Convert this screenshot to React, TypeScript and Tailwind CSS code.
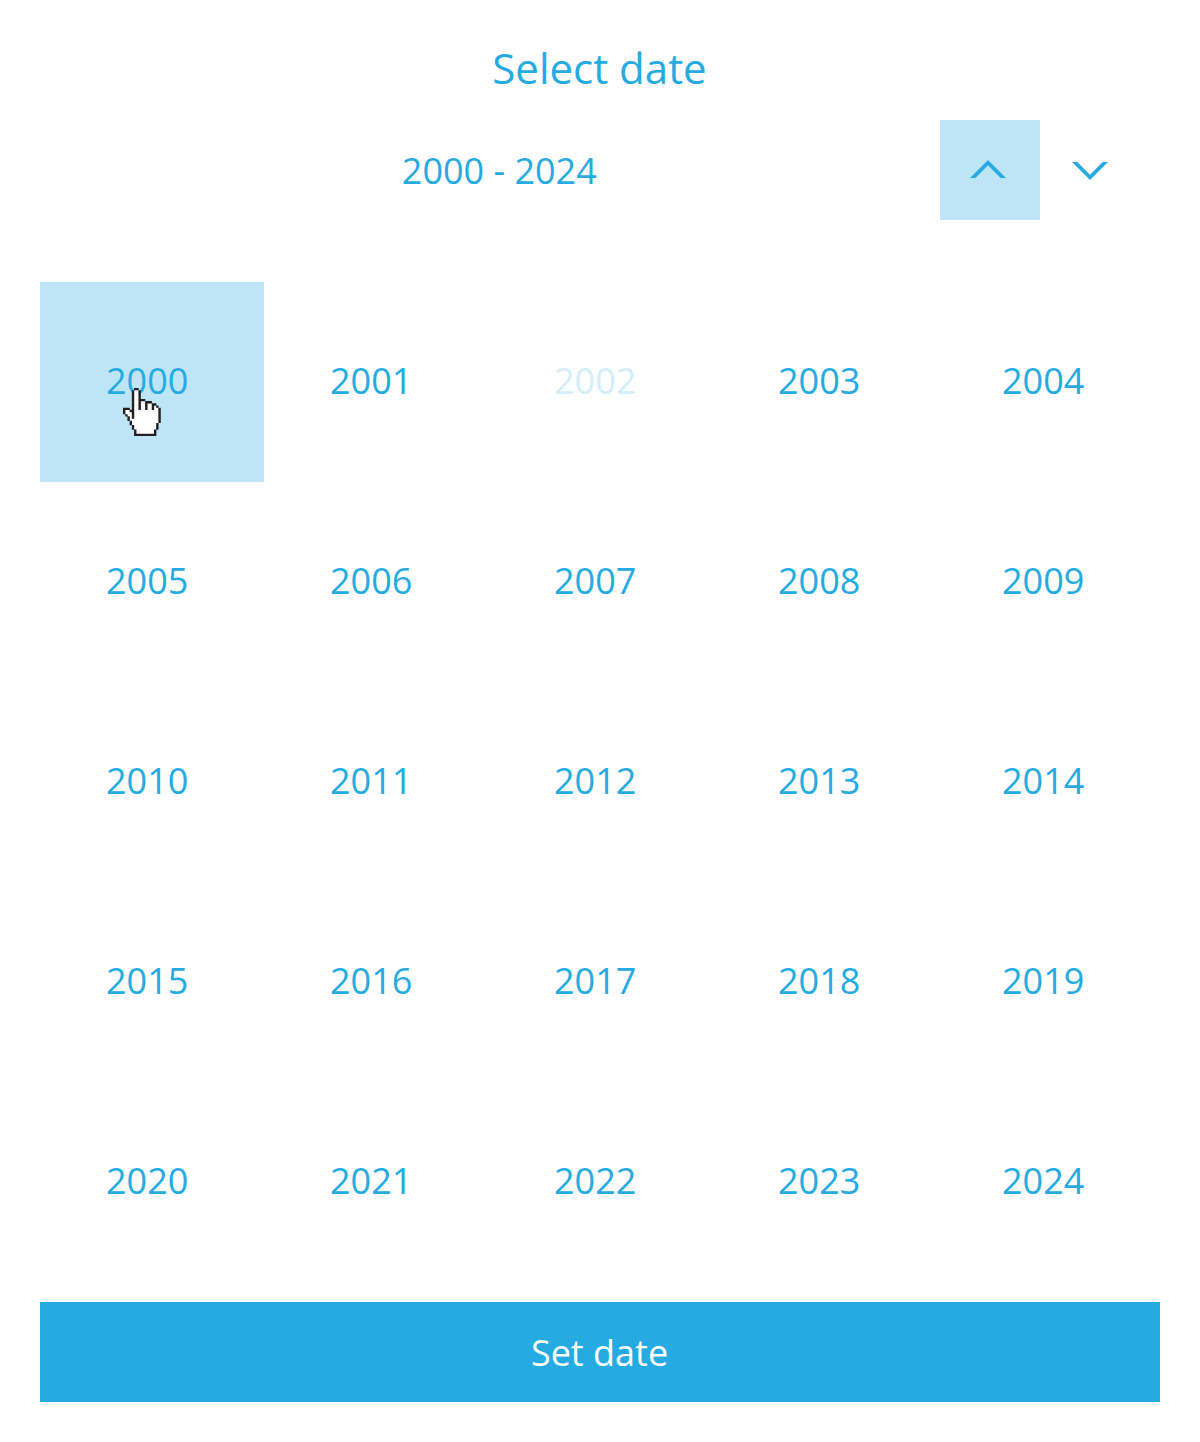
const years = Array.from({ length: 25 }, (_, i) => 2000 + i);

const handRows = [
  '.....XX..........',
  '....XooX.........',
  '....XooX.........',
  '....XooX.........',
  '....XooX.........',
  '....XooXXX.......',
  '....XooXooXXX....',
  '....XooXooXooXX..',
  '....XooXooXooXoX.',
  'XXX.XooXooXooXooX',
  'XooXXoooooooooooX',
  'XoooXoooooooooooX',
  '.XooXoooooooooooX',
  '..XoXoooooooooooX',
  '..XoooooooooooooX',
  '...XooooooooooooX',
  '...XoooooooooooX.',
  '....XooooooooooX.',
  '....XooooooooooX.',
  '.....XooooooooX..',
  '.....XooooooooX..',
  '.....XXXXXXXXXX..',
];

const pixelPath = (mark: string) =>
  handRows
    .flatMap((row, y) => [...row].map((c, x) => (c === mark ? `M${x} ${y}h1.08v1.08h-1.08z` : '')))
    .join('');

function HandCursor() {
  return (
    <svg className="absolute top-[106px] left-[83.4px] h-[48px] w-[37.6px]" viewBox="0 0 17 22" preserveAspectRatio="none">
      <path d={pixelPath('o')} fill="#fff" />
      <path d={pixelPath('X')} fill="#231f20" />
    </svg>
  );
}

function yearClass(year: number) {
  if (year === 2000) return 'relative bg-[#bee5f6]';
  if (year === 2002) return 'text-[#d4eefa]';
  return '';
}

export default function App() {
  return (
    <main className="flex h-[1442px] w-[1200px] flex-col bg-white px-10 pb-10 font-['Open_Sans',sans-serif] text-[36px] text-[#26aae2]">
      <h1 className="flex h-[120px] items-center justify-center pt-[14px] pr-px text-[42px]">Select date</h1>
      <div className="flex h-[100px]">
        <div className="flex flex-1 items-center justify-center pt-[2px] pl-[18.6px]">2000 - 2024</div>
        <button className="flex w-[100px] justify-center bg-[#bee5f6] pt-10 pr-1" aria-label="Previous years">
          <svg className="h-[18px] w-9" viewBox="0 0 36 18" fill="#26aae2">
            <path d="M0 18 18 0l18 18h-5.3L18 5.3 5.3 18z" />
          </svg>
        </button>
        <button className="flex w-[100px] justify-center pt-[42px]" aria-label="Next years">
          <svg className="h-[18px] w-9" viewBox="0 0 36 18" fill="#26aae2">
            <path d="M0 0 18 18 36 0h-5.3L18 12.7 5.3 0z" />
          </svg>
        </button>
        <div className="w-5" />
      </div>
      <div className="mt-[62px] grid grid-cols-5">
        {years.map((year) => (
          <div key={year} className={`flex h-[200px] items-center pb-[2px] pl-[66px] ${yearClass(year)}`}>
            {year}
            {year === 2000 && <HandCursor />}
          </div>
        ))}
      </div>
      <button className="mt-5 h-[100px] bg-[#26aae2] pt-[2px] pr-px text-white">Set date</button>
    </main>
  );
}
